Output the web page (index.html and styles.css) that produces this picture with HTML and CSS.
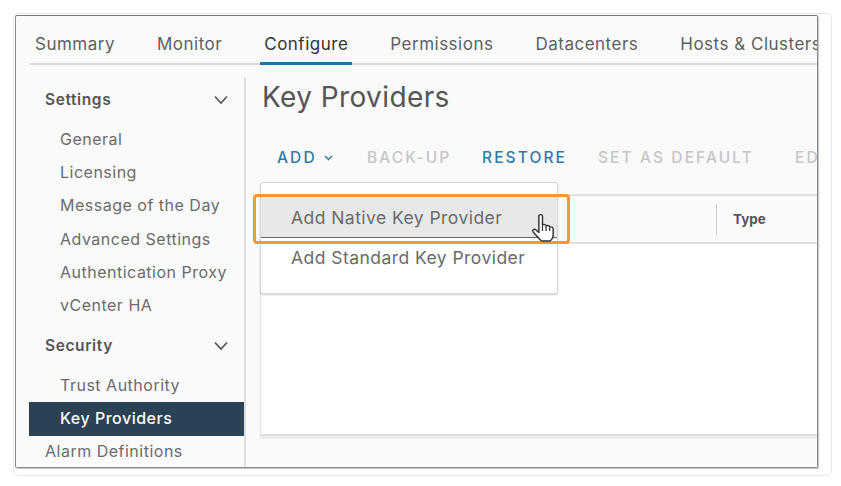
FILE: index.html
```html
<!DOCTYPE html>
<html lang="en">

<head>
    <meta charset="UTF-8">
    <meta name="viewport" content="width=device-width, initial-scale=1.0">
    <title>Key Providers</title>
    <link rel="stylesheet" href="styles.css">
</head>

<body>
    <div class="card">
        <div class="window">
            <nav class="tabs">
                <a class="tab">Summary</a>
                <a class="tab">Monitor</a>
                <a class="tab active">Configure</a>
                <a class="tab">Permissions</a>
                <a class="tab">Datacenters</a>
                <a class="tab">Hosts &amp; Clusters</a>
            </nav>

            <div class="main">
                <aside class="sidebar">
                    <div class="group">
                        <span>Settings</span>
                        <svg class="chevron" width="16" height="10" viewBox="0 0 16 10"><path d="M2 1.5 8 8l6-6.5" /></svg>
                    </div>
                    <a class="item">General</a>
                    <a class="item">Licensing</a>
                    <a class="item">Message of the Day</a>
                    <a class="item">Advanced Settings</a>
                    <a class="item">Authentication Proxy</a>
                    <a class="item">vCenter HA</a>
                    <div class="group security">
                        <span>Security</span>
                        <svg class="chevron" width="16" height="10" viewBox="0 0 16 10"><path d="M2 1.5 8 8l6-6.5" /></svg>
                    </div>
                    <a class="item">Trust Authority</a>
                    <a class="item selected">Key Providers</a>
                    <a class="item top">Alarm Definitions</a>
                </aside>

                <section class="content">
                    <h1>Key Providers</h1>
                    <div class="toolbar">
                        <button class="action on add">ADD
                            <svg width="9" height="6" viewBox="0 0 9 6"><path d="M1 1 4.5 4.5 8 1" /></svg>
                        </button>
                        <button class="action backup">BACK-UP</button>
                        <button class="action on restore">RESTORE</button>
                        <button class="action default">SET AS DEFAULT</button>
                        <button class="action">EDIT</button>
                    </div>
                    <div class="table">
                        <div class="table-head">
                            <div class="col-name"></div>
                            <div class="col-type">Type</div>
                        </div>
                        <div class="table-body"></div>
                    </div>
                    <div class="table-foot"></div>
                </section>
            </div>

            <div class="menu">
                <div class="menu-item hover">Add Native Key Provider</div>
                <div class="menu-item">Add Standard Key Provider</div>
            </div>
            <div class="callout"></div>
            <svg class="cursor" width="27" height="30" viewBox="0 0 24 30" preserveAspectRatio="none">
                <path d="M7 3.2c0-2.2 3.2-2.2 3.2 0v8.6c1.6-.8 3 0 3.3 1 1.5-.7 3 0 3.2 1.2 1.7-.5 3 .5 3 2v5.5c0 3-1.5 5.5-3 6.5H9.5c-1.5-1-2.5-2.5-4-4.5L1.8 18.8c-1-1.8 1.2-3.4 2.7-1.8L7 19.5z" fill="#fff" stroke="#333" stroke-width="1.3" stroke-linejoin="round" />
                <path d="M10.2 12v6M13.4 13v5M16.6 14.2V18" fill="none" stroke="#333" stroke-width="1.1" />
            </svg>
        </div>
    </div>
</body>
</html>
```

FILE: styles.css
```css
body {
    font-family: Inter, "Open Sans", Arial, sans-serif;
    background-color: #ffffff;
    margin: 0;
    padding: 13px 9px 10px 13px;
    height: 486px;
    box-sizing: border-box;
    overflow: hidden;
    color: #575757;
}

.card {
    width: 819px;
    height: 463px;
    box-sizing: border-box;
    border: 1px solid #e6e6e6;
    border-radius: 6px;
    padding: 1px 13px 7px 1px;
}

.window {
    position: relative;
    height: 100%;
    box-sizing: border-box;
    background-color: #fafafa;
    border: 1px solid #8c8c8c;
    border-top-color: #777777;
    border-radius: 2px;
    box-shadow: 1px 1px 1px rgba(0, 0, 0, 0.25);
    overflow: hidden;
    display: flex;
    flex-direction: column;
}

.tabs {
    display: flex;
    gap: 42px;
    height: 49px;
    margin-left: 13px;
    padding-left: 6px;
    box-sizing: border-box;
    border-bottom: 2px solid #dcdcdc;
    white-space: nowrap;
    flex-shrink: 0;
}

.tab {
    font-size: 17px;
    letter-spacing: 0.5px;
    line-height: 20px;
    padding-top: 18px;
    box-sizing: border-box;
    height: 49px;
    color: #5f5f5f;
}

.tab.active {
    color: #333333;
    border-bottom: 3px solid #1f6fa8;
    margin: 0 -4px;
    padding-left: 4px;
    padding-right: 4px;
}

.main {
    display: flex;
    flex: 1;
    min-height: 0;
    padding-left: 13px;
    padding-top: 13px;
}

.sidebar {
    width: 217px;
    box-sizing: border-box;
    padding-top: 12px;
    border-right: 2px solid #dedede;
    flex-shrink: 0;
    display: flex;
    flex-direction: column;
}

.group {
    display: flex;
    justify-content: space-between;
    align-items: center;
    height: 20px;
    margin-bottom: 14px;
    padding: 0 15px 0 16px;
    font-size: 15.5px;
    letter-spacing: 0.6px;
    font-weight: 600;
    color: #555555;
}

.group.security {
    margin-top: 14px;
    margin-bottom: 14px;
}

.chevron {
    fill: none;
    stroke: #555555;
    stroke-width: 1.7;
}

.item {
    font-size: 16px;
    letter-spacing: 0.5px;
    line-height: 33.2px;
    height: 33.2px;
    padding-left: 31px;
    color: #6b6b6b;
    white-space: nowrap;
    flex-shrink: 0;
}

.item.selected {
    background-color: #2a4254;
    color: #ffffff;
    font-weight: 500;
}

.item.top {
    padding-left: 16px;
    margin-top: -1px;
}

.content {
    flex: 1;
    min-width: 0;
    display: flex;
    flex-direction: column;
    padding-left: 14px;
    padding-top: 1px;
}

h1 {
    font-size: 28px;
    font-weight: 400;
    line-height: 36px;
    margin: 0 0 0 2px;
    color: #555555;
    letter-spacing: 0.4px;
}

.toolbar {
    display: flex;
    margin-top: 32px;
    height: 20px;
    padding-left: 17px;
    white-space: nowrap;
}

.action {
    font-family: inherit;
    font-size: 15.5px;
    font-weight: 500;
    letter-spacing: 2.1px;
    background: none;
    border: none;
    padding: 0;
    color: #c6c6c6;
    flex-shrink: 0;
}

.action.on {
    color: #2f7aa9;
}

.action svg {
    fill: none;
    stroke: #2f7aa9;
    stroke-width: 1.5;
    vertical-align: 2px;
    margin-left: 1px;
}

.add {
    width: 90px;
    text-align: left;
}

.backup {
    width: 115px;
    text-align: left;
}

.restore {
    width: 116px;
    text-align: left;
}

.default {
    width: 197px;
    text-align: left;
}

.table {
    margin-top: 27px;
    flex: 1;
    background-color: #ffffff;
    border-top: 2px solid #dedede;
    border-left: 1px solid #e2e2e2;
    display: flex;
    flex-direction: column;
}

.table-head {
    display: flex;
    height: 48px;
    box-sizing: border-box;
    border-bottom: 2px solid #dedede;
    flex-shrink: 0;
    background-color: #fafafa;
    align-items: center;
}

.col-name {
    width: 455px;
    height: 31px;
    border-right: 1px solid #cfcfcf;
    flex-shrink: 0;
}

.col-type {
    padding-left: 16px;
    font-size: 13.5px;
    font-weight: 700;
    color: #565656;
}

.table-body {
    flex: 1;
}

.table-foot {
    height: 31px;
    border-top: 2px solid #dedede;
    flex-shrink: 0;
    background: linear-gradient(#ececec 3px, #fafafa 3px);
}

/* dropdown and the annotation over it lie on top of the table */
.menu {
    position: absolute;
    left: 244px;
    top: 166px;
    width: 298px;
    height: 112px;
    box-sizing: border-box;
    background-color: #ffffff;
    border: 1px solid #d8d8d8;
    border-radius: 3px;
    box-shadow: 0 1px 2px rgba(0, 0, 0, 0.2);
    padding-top: 14px;
}

.menu-item {
    height: 41px;
    box-sizing: border-box;
    padding-left: 30px;
    font-size: 17.5px;
    letter-spacing: 0.45px;
    line-height: 40px;
    color: #6b6b6b;
    white-space: nowrap;
}

.menu-item.hover {
    background-color: #e8e8e8;
    border-bottom: 1px solid #666666;
    line-height: 42px;
}

.callout {
    position: absolute;
    left: 237px;
    top: 178px;
    width: 317px;
    height: 50px;
    box-sizing: border-box;
    border: 3px solid #ef9a33;
    border-radius: 4px;
}

.cursor {
    position: absolute;
    left: 515px;
    top: 197px;
}
```
